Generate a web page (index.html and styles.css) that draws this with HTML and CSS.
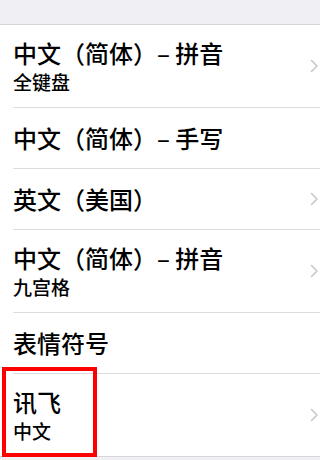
FILE: index.html
```html
<!DOCTYPE html>
<html lang="zh-CN">
<head>
<meta charset="utf-8">
<title>键盘</title>
<link rel="stylesheet" href="styles.css">
</head>
<body>
<div class="top"></div>
<ul class="list">
  <li class="row double">
    <div class="labels"><span class="main">中文（简体）– 拼音</span><span class="sub">全键盘</span></div>
    <svg class="chev" viewBox="0 0 9 14" width="9" height="14"><polyline points="1.5,1.5 7,7 1.5,12.5"/></svg>
  </li>
  <li class="row">
    <div class="labels"><span class="main">中文（简体）– 手写</span></div>
  </li>
  <li class="row">
    <div class="labels"><span class="main">英文（美国）</span></div>
    <svg class="chev" viewBox="0 0 9 14" width="9" height="14"><polyline points="1.5,1.5 7,7 1.5,12.5"/></svg>
  </li>
  <li class="row double">
    <div class="labels"><span class="main">中文（简体）– 拼音</span><span class="sub">九宫格</span></div>
    <svg class="chev" viewBox="0 0 9 14" width="9" height="14"><polyline points="1.5,1.5 7,7 1.5,12.5"/></svg>
  </li>
  <li class="row">
    <div class="labels"><span class="main">表情符号</span></div>
  </li>
  <li class="row double last">
    <div class="labels"><span class="main">讯飞</span><span class="sub">中文</span></div>
    <svg class="chev" viewBox="0 0 9 14" width="9" height="14"><polyline points="1.5,1.5 7,7 1.5,12.5"/></svg>
    <div class="highlight"></div>
  </li>
</ul>
</body>
</html>
```

FILE: styles.css
```css
html, body {
  margin: 0;
  padding: 0;
  background: #efeff4;
  font-family: "Noto Sans CJK SC", "Noto Sans", sans-serif;
  color: #000;
}

.top {
  height: 24px;
  border-bottom: 1px solid #d6d6da;
}

.list {
  list-style: none;
  margin: 0;
  padding: 0 0 0 13px;
  background: #fff;
  border-bottom: 1px solid #d6d6da;
}

.row {
  position: relative;
  display: flex;
  align-items: center;
  height: 60px;
  border-bottom: 1px solid #dcdce0;
}

.row.double {
  height: 82px;
}

.row.last {
  border-bottom: none;
}

.labels {
  flex: 1;
  display: flex;
  flex-direction: column;
  gap: 2px;
}

.main {
  display: block;
  font-size: 24px;
  line-height: 30px;
  font-weight: 500;
}

.sub {
  display: block;
  font-size: 19px;
  line-height: 24px;
  font-weight: 500;
}

.chev {
  flex: none;
  margin-right: 1px;
  fill: none;
  stroke: #c7c7cc;
  stroke-width: 1.6;
  stroke-linecap: round;
  stroke-linejoin: round;
}

.highlight {
  position: absolute;
  left: -11px;
  top: -7px;
  width: 95px;
  height: 90px;
  box-sizing: border-box;
  border: 4px solid #ff0000;
}
```
